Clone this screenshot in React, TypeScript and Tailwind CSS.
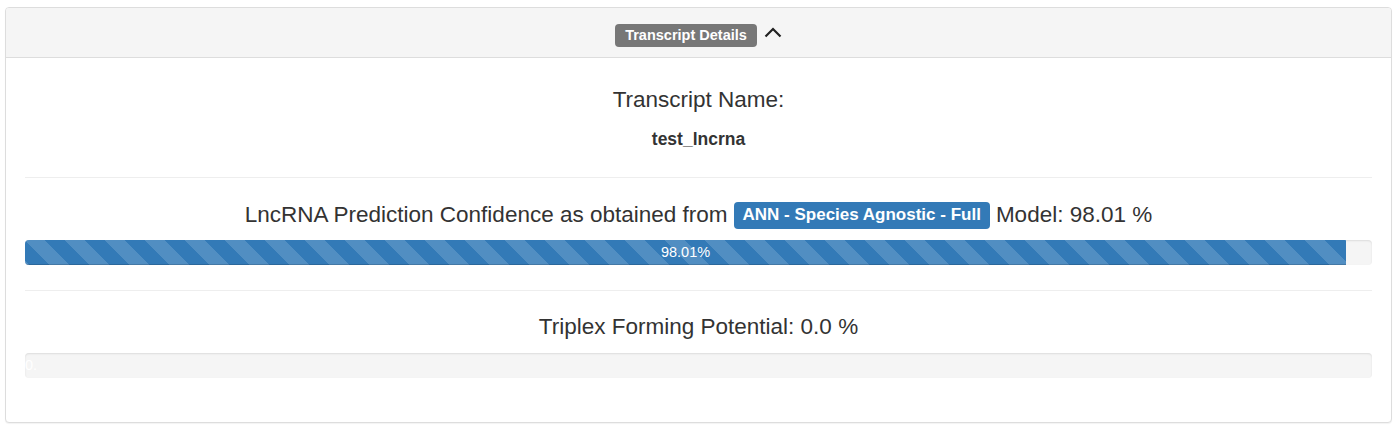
const stripes =
  "bg-[linear-gradient(45deg,rgba(255,255,255,.15)_25%,transparent_25%,transparent_50%,rgba(255,255,255,.15)_50%,rgba(255,255,255,.15)_75%,transparent_75%,transparent)] bg-[length:40px_40px]";

function ProgressBar({ value, label }: { value: number; label: string }) {
  return (
    <div className="h-[25px] w-full overflow-hidden rounded-[4px] bg-[#f5f5f5] shadow-[inset_0_1px_2px_rgba(0,0,0,0.1)]">
      <div
        className={`flex h-full items-center justify-center whitespace-nowrap bg-[#337ab7] text-[14.5px] leading-none text-white shadow-[inset_0_-1px_0_rgba(0,0,0,0.15)] ${stripes}`}
        style={{ width: `${value}%` }}
      >
        {label}
      </div>
    </div>
  );
}

export default function App() {
  return (
    <div className="min-h-screen bg-white px-[5px] pt-[7px] font-['Liberation_Sans',Arial,sans-serif] text-[#333]">
      <div className="overflow-hidden rounded-[4px] border border-[#ddd] bg-white shadow-[0_1px_1px_rgba(0,0,0,0.05)]">
        {/* header */}
        <div className="flex h-[50px] justify-center border-b border-[#ddd] bg-[#f5f5f5] pt-[16px]">
          <div className="flex items-start gap-[7px]">
            <span className="flex h-[23px] items-center rounded-[4px] bg-[#777] px-[10px] text-[14.5px] font-bold text-white">
              Transcript Details
            </span>
            <svg width="18" height="12" viewBox="0 0 18 12" className="mt-[2px]">
              <polyline points="1.5,10.5 9,3 16.5,10.5" fill="none" stroke="#222" strokeWidth="2.2" />
            </svg>
          </div>
        </div>

        {/* body */}
        <div className="px-[19px] pb-[44px] pt-[28px]">
          <div className="text-center text-[22.5px] leading-[28px]">Transcript Name:</div>
          <div className="mt-[14px] text-center text-[17.5px] font-bold leading-[22px]">test_lncrna</div>

          <hr className="mt-[27px] border-t border-[#eee]" />

          <div className="mt-[23px] flex h-[28px] items-center justify-center text-[22.5px]">
            <span>LncRNA Prediction Confidence as obtained from</span>
            <span className="mx-[6px] flex h-[27px] items-center rounded-[4px] bg-[#337ab7] px-[9px] text-[17px] font-bold text-white">
              ANN - Species Agnostic - Full
            </span>
            <span>Model: 98.01 %</span>
          </div>
          <div className="mt-[11px]">
            <ProgressBar value={98.07} label="98.01%" />
          </div>

          <hr className="mt-[25px] border-t border-[#eee]" />

          <div className="mt-[22px] text-center text-[22.5px] leading-[28px]">Triplex Forming Potential: 0.0 %</div>
          <div className="mt-[12px]">
            <div className="h-[25px] w-full overflow-hidden rounded-[4px] bg-[#f5f5f5] shadow-[inset_0_1px_2px_rgba(0,0,0,0.1)]">
              <div className="flex h-full items-center text-[14.5px] leading-none text-white">0.</div>
            </div>
          </div>
        </div>
      </div>
    </div>
  );
}
